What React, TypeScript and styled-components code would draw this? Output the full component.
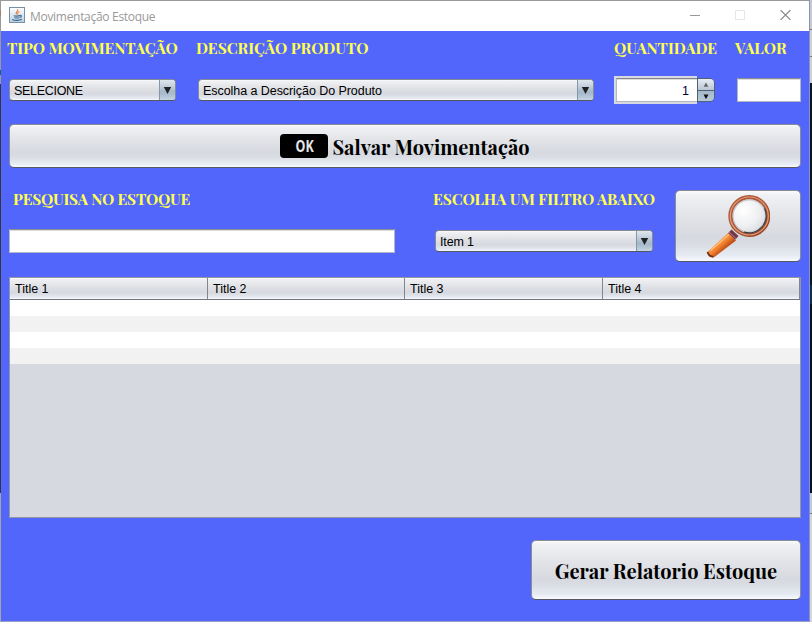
import React from 'react';
import styled, { createGlobalStyle, css } from 'styled-components';

const GlobalStyle = createGlobalStyle`
  * { box-sizing: border-box; }
  html, body { margin: 0; padding: 0; overflow: hidden; }
  body { font: 12.5px "Liberation Sans", Arial, sans-serif; color: #000; }
`;

const metal = css`
  background: linear-gradient(#fbfbfc 0, #f0f1f3 6%, #e3e4e8 35%, #d6d9df 66%, #d9dce2 75%, #e6eaf2 92%, #f8faff 100%);
`;

const steel = css`
  background: linear-gradient(#dfe7ee 0, #c3d1dd 30%, #a5b9ca 58%, #a9bccd 70%, #c4d5e4 100%);
`;

const Desktop = styled.div`
  width: 812px;
  height: 622px;
  display: flex;
  background: linear-gradient(#c9c9c9 0 29px, #777 29px 30px, #d2d2d2 30px 56px, #777 56px 57px, #d2d2d2 57px 83px, #0b1720 83px 285px, #102e49 285px 304px, #06111e 304px 493px, #c2cbd7 493px 513px, #777 513px 514px, #d6d6d6 514px);
`;

const LeftEdge = styled.div`
  width: 1px;
  background: linear-gradient(#999 0 10px, #a08366 10px 16px, #999 16px 70px, #1e607c 70px 75px, #999 75px 84px, #34373c 84px 493px, #a5a5a5 493px);
`;

const Window = styled.main`
  width: 809px;
  display: flex;
  flex-direction: column;
  background: #5266fb;
  border-top: 1px solid #999;
  border-right: 1px solid #8a93c8;
  border-bottom: 1px solid #999fc4;
`;

const TitleBar = styled.header`
  height: 30px;
  display: flex;
  align-items: center;
  background: #fff;
  padding: 0 18px 2px 8px;
  color: #999;
`;

const Title = styled.h1`
  margin: 2px auto 0 5px;
  font: 12px "Open Sans", "Noto Sans", sans-serif;
  letter-spacing: -0.3px;
`;

const WindowButtons = styled.div`
  display: flex;
  gap: 35px;
  svg { display: block; }
`;

const Content = styled.div`
  flex: 1;
  padding: 0 8px 0;
  display: flex;
  flex-direction: column;
`;

const EntryRow = styled.section`
  display: grid;
  grid-template-columns: 188px 417px 123px 64px;
  height: 93px;
`;

const Field = styled.div<{ $indent?: number }>`
  display: flex;
  flex-direction: column;
  padding-left: ${p => p.$indent ?? 0}px;
`;

const Label = styled.label<{ $spacing?: number; $shift?: number }>`
  height: 45px;
  padding-top: 8px;
  margin-left: ${p => p.$shift ?? 0}px;
  white-space: nowrap;
  color: #ffff4d;
  font: bold 15.5px/18px "Playfair Display", "Liberation Serif", serif;
  letter-spacing: ${p => p.$spacing ?? 0}px;
`;

const ComboBox = styled.div<{ $width: number }>`
  width: ${p => p.$width}px;
  height: 22px;
  margin-top: 3px;
  display: flex;
  align-items: center;
  border: 1px solid #858a93;
  border-bottom-color: #55585f;
  border-radius: 4px;
  overflow: hidden;
  ${metal}
`;

const ComboText = styled.span<{ $spacing: number }>`
  flex: 1;
  padding-left: 4px;
  line-height: 20px;
  margin-top: 2px;
  letter-spacing: ${p => p.$spacing}px;
`;

const ComboArrow = styled.span`
  width: 16px;
  height: 20px;
  display: grid;
  place-items: center;
  border-left: 1px solid #8796a6;
  ${steel}
`;

const TextInput = styled.input<{ $width: number }>`
  width: ${p => p.$width}px;
  height: 24px;
  margin-top: 2px;
  padding: 0 5px;
  border: 1px solid #b4b7c4;
  border-top-color: #8d8e92;
  border-radius: 0;
  outline: none;
  background: #fff;
  box-shadow: inset 0 1px #ddd;
`;

const Spinner = styled.div`
  display: flex;
  align-items: center;
  height: 28px;
`;

const SpinnerValue = styled.div`
  width: 83px;
  height: 28px;
  border: 2px solid #d6d9df;
  border-right: 0;
  display: flex;
`;

const SpinnerText = styled.div`
  flex: 1;
  border: 1px solid #b4b7c4;
  border-top-color: #85878c;
  border-right: 0;
  box-shadow: inset 0 1px #ddd;
  background: #fff;
  color: #000033;
  text-align: right;
  padding-right: 8px;
  line-height: 24px;
`;

const SpinnerButtons = styled.div`
  width: 18px;
  height: 24px;
  border: 1px solid #4f6274;
  border-radius: 0 5px 5px 0;
  overflow: hidden;
`;

const SpinnerButton = styled.div`
  height: 11px;
  display: grid;
  place-items: center;
  background: linear-gradient(#e8edf2, #b8c7d5);
  & + & {
    height: 12px;
    border-top: 1px solid #4f6274;
    background: linear-gradient(#a5b9ca, #b9cbdb);
  }
`;

const Button = styled.button<{ $width: number; $height: number }>`
  width: ${p => p.$width}px;
  height: ${p => p.$height}px;
  flex: none;
  padding: 0;
  display: flex;
  align-items: center;
  justify-content: center;
  border: 1px solid #898c94;
  border-bottom-color: #55585f;
  border-radius: 5px;
  color: #000;
  ${metal}
`;

const ButtonText = styled.span`
  font: bold 20px/28px "Playfair Display", "Liberation Serif", serif;
  white-space: nowrap;
  margin-top: 2px;
`;

const OkBadge = styled.span`
  width: 48px;
  height: 24px;
  margin-right: 4px;
  border-radius: 4px;
  background: #000;
  color: #e4e5e8;
  display: grid;
  place-items: center;
  font: bold 16px/24px "Noto Sans", sans-serif;
  span { transform: scaleX(0.78); }
`;

const SearchRow = styled.section`
  display: grid;
  grid-template-columns: 424px 242px 126px;
  height: 87px;
  margin-top: 22px;
  ${Label} { padding-top: 0; height: 37px; }
  ${Button} { padding: 0 3px 2px 0; }
`;

const TablePane = styled.div`
  height: 241px;
  border: 1px solid #9297a1;
  background: #d6d9df;
`;

const Table = styled.table`
  width: 790px;
  table-layout: fixed;
  border-collapse: separate;
  border-spacing: 0;
`;

const HeaderCell = styled.th`
  height: 22px;
  padding: 0 0 0 5px;
  text-align: left;
  font-weight: normal;
  line-height: 20px;
  border-right: 1px solid #81858d;
  border-bottom: 1px solid #72757c;
  ${metal}
`;

const Cell = styled.td`
  height: 16px;
  padding: 0;
  background: #fff;
  tr:nth-child(even) > & { background: #f2f2f2; }
`;

const Footer = styled.footer`
  display: flex;
  justify-content: flex-end;
  margin-top: 22px;
`;

const Triangle = ({ up, size = 9, color = '#222' }: { up?: boolean; size?: number; color?: string }) => (
  <svg width={size} height={size} viewBox="0 0 10 10">
    <path d={up ? 'M1 8h8L5 1z' : 'M.9 1h8.2L5 8.8z'} fill={color} />
  </svg>
);

const JavaIcon = () => (
  <svg width="16" height="16" viewBox="0 0 16 16">
    <defs>
      <linearGradient id="java" x1="0" y1="0" x2="0" y2="1">
        <stop stopColor="#fff" /><stop offset="1" stopColor="#b9cfe2" />
      </linearGradient>
    </defs>
    <rect x=".5" y=".5" width="15" height="15" fill="url(#java)" stroke="#7790a4" />
    <path d="M8.7 2.2C9.6 4 6 4.7 7.4 7.5M10.3 4.5C8 5.6 8.4 6.3 9 7.6" fill="none" stroke="#e57c35" strokeWidth="1.1" />
    <path d="M4.6 8.6c1 .7 5 .6 6.2 0M5.4 10.6c1 .6 3.8.6 4.8 0M10.8 8.4c2.3-.5 2 1.6-.2 2M3.2 12.5c2.2 1.3 7.5 1.2 9.6-.2" fill="none" stroke="#39688f" strokeWidth="1.1" />
  </svg>
);

const Magnifier = () => (
  <svg width="66" height="66" viewBox="0 0 66 66">
    <defs>
      <linearGradient id="handle" gradientUnits="userSpaceOnUse" x1="12" y1="49" x2="20" y2="58">
        <stop stopColor="#f6a04c" /><stop offset=".5" stopColor="#f58532" /><stop offset="1" stopColor="#bd4c14" />
      </linearGradient>
      <linearGradient id="rim" x1="0" y1="0" x2="1" y2="1">
        <stop stopColor="#b4583a" /><stop offset=".5" stopColor="#ad5838" /><stop offset="1" stopColor="#963c1b" />
      </linearGradient>
      <radialGradient id="lens" cx=".35" cy=".35" r=".7">
        <stop stopColor="#fff" /><stop offset=".6" stopColor="#eeeff1" /><stop offset="1" stopColor="#d5d8dd" />
      </radialGradient>
    </defs>
    <path d="M24.3 40.8 32 48.5 10.4 65Q5.5 66 3.4 60z" fill="url(#handle)" />
    <path d="M3.6 60q1 4.5 5.8 4.8" stroke="#733013" strokeWidth="1.8" fill="none" />
    <path d="m6.5 58.5 18.5-16" stroke="#ffc07b" strokeWidth="1.4" />
    <path d="m27.5 37.5 7 6.5-3.3 3.8-7-6.7z" fill="#743747" />
    <path d="m25 40 7 6.6" stroke="#b77886" strokeWidth="1" />
    <circle cx="45.3" cy="24" r="18.8" fill="url(#lens)" stroke="url(#rim)" strokeWidth="4.4" />
    <circle cx="45.3" cy="24" r="19" fill="none" stroke="#dda07f" strokeWidth="1.2" />
    <circle cx="45.3" cy="24" r="16.2" fill="none" stroke="#c8cbd0" strokeWidth="1.2" />
    <path d="M60.5 16.5A17 17 0 0 1 40 40" fill="none" stroke="#353f46" strokeWidth="1.1" />
  </svg>
);

const columns = ['Title 1', 'Title 2', 'Title 3', 'Title 4'];
const columnWidths = [198, 197, 198, 197];

const Combo = ({ text, width, spacing = 0 }: { text: string; width: number; spacing?: number }) => (
  <ComboBox $width={width}>
    <ComboText $spacing={spacing}>{text}</ComboText>
    <ComboArrow><Triangle /></ComboArrow>
  </ComboBox>
);

export default function App() {
  return (
    <>
      <GlobalStyle />
      <Desktop>
        <LeftEdge />
        <Window>
          <TitleBar>
            <JavaIcon />
            <Title>Movimentação Estoque</Title>
            <WindowButtons>
              <svg width="10" height="10"><path d="M0 5.5h10" stroke="#999" /></svg>
              <svg width="10" height="10"><path d="M.5.5h9v9h-9z" fill="none" stroke="#e6e6e6" /></svg>
              <svg width="11" height="10"><path d="m.5 0 10 10m0-10-10 10" stroke="#888" strokeWidth="1.1" /></svg>
            </WindowButtons>
          </TitleBar>
          <Content>
            <EntryRow>
              <Field>
                <Label $shift={-2} $spacing={-0.12}>TIPO MOVIMENTAÇÃO</Label>
                <Combo text="SELECIONE" width={167} spacing={-0.3} />
              </Field>
              <Field $indent={1}>
                <Label $shift={-2} $spacing={-0.04}>DESCRIÇÃO PRODUTO</Label>
                <Combo text="Escolha a Descrição Do Produto" width={396} spacing={-0.06} />
              </Field>
              <Field>
                <Label>QUANTIDADE</Label>
                <Spinner>
                  <SpinnerValue><SpinnerText>1</SpinnerText></SpinnerValue>
                  <SpinnerButtons>
                    <SpinnerButton><Triangle up size={6} color="#666" /></SpinnerButton>
                    <SpinnerButton><Triangle size={6} color="#111" /></SpinnerButton>
                  </SpinnerButtons>
                </Spinner>
              </Field>
              <Field>
                <Label $shift={-2}>VALOR</Label>
                <TextInput $width={64} />
              </Field>
            </EntryRow>
            <Button $width={792} $height={44}>
              <OkBadge><span>OK</span></OkBadge>
              <ButtonText>Salvar Movimentação</ButtonText>
            </Button>
            <SearchRow>
              <Field>
                <Label $shift={4} $spacing={-0.23}>PESQUISA NO ESTOQUE</Label>
                <TextInput $width={386} />
              </Field>
              <Field $indent={2}>
                <Label $shift={-2} $spacing={-0.12}>ESCOLHA UM FILTRO ABAIXO</Label>
                <Combo text="Item 1" width={218} spacing={-0.15} />
              </Field>
              <Button $width={126} $height={72} aria-label="Pesquisar"><Magnifier /></Button>
            </SearchRow>
            <TablePane>
              <Table>
                <colgroup>{columnWidths.map((w, i) => <col key={i} width={w} />)}</colgroup>
                <thead>
                  <tr>{columns.map(c => <HeaderCell key={c}>{c}</HeaderCell>)}</tr>
                </thead>
                <tbody>
                  {[0, 1, 2, 3].map(r => <tr key={r}>{columns.map(c => <Cell key={c} />)}</tr>)}
                </tbody>
              </Table>
            </TablePane>
            <Footer>
              <Button $width={270} $height={60}>
                <ButtonText>Gerar Relatorio Estoque</ButtonText>
              </Button>
            </Footer>
          </Content>
        </Window>
      </Desktop>
    </>
  );
}
